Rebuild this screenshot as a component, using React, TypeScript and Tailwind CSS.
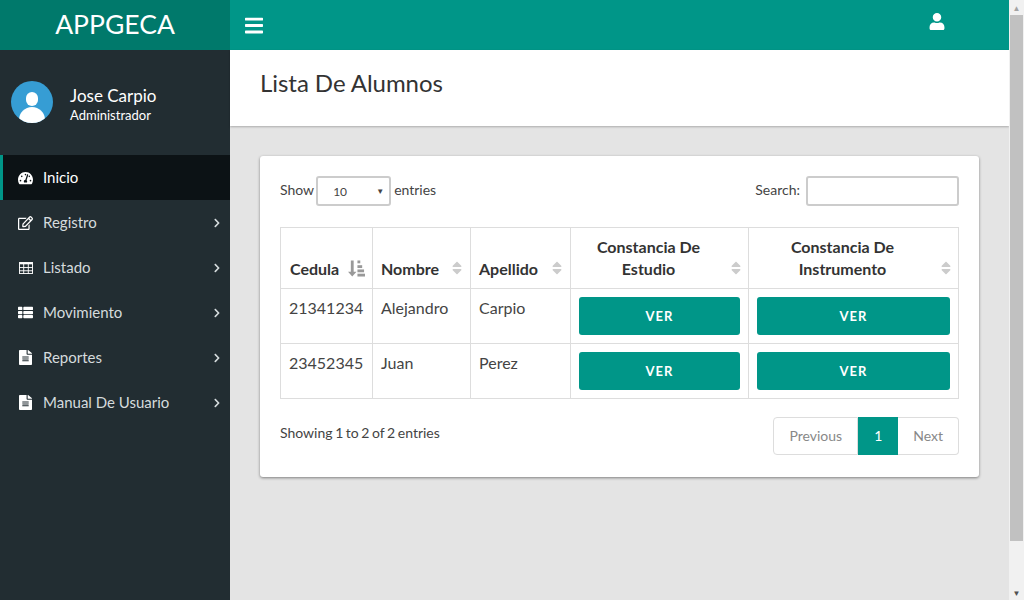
import { FaBars, FaChevronRight, FaFileAlt, FaRegEdit, FaSort, FaTachometerAlt, FaThList, FaUser } from 'react-icons/fa'

const GridIcon = ({ className }: { className?: string; preserveAspectRatio?: string }) => (
  <svg viewBox="0 0 15 13" className={className} fill="none" stroke="currentColor" strokeWidth="1">
    <rect x="0.5" y="0.5" width="14" height="12" />
    <path d="M0.5 1.5H14.5" strokeWidth="2" />
    <path d="M0 6H15M0 9.5H15M5 2V13M10 2V13" />
  </svg>
)

const SortedIcon = ({ className }: { className?: string }) => (
  <svg viewBox="0 0 18 17" className={className} fill="currentColor">
    <path d="M3 0H6V12H9L4.5 17L0 12H3Z" />
    <rect x="10" y="0" width="3" height="3" />
    <rect x="10" y="5" width="5" height="3" />
    <rect x="10" y="9.5" width="7" height="3" />
    <rect x="10" y="14" width="8" height="3" />
  </svg>
)

const menu = [
  { name: 'Inicio', icon: FaTachometerAlt, size: 'w-[15px] h-[14px]', active: true },
  { name: 'Registro', icon: FaRegEdit, size: 'w-[15px] h-[14px]' },
  { name: 'Listado', icon: GridIcon, size: 'w-[14px] h-[12px]' },
  { name: 'Movimiento', icon: FaThList, size: 'w-[15px] h-[13px]' },
  { name: 'Reportes', icon: FaFileAlt, size: 'w-[13px] h-[15px]' },
  { name: 'Manual De Usuario', icon: FaFileAlt, size: 'w-[13px] h-[15px]' },
]

const alumnos = [
  { cedula: '21341234', nombre: 'Alejandro', apellido: 'Carpio' },
  { cedula: '23452345', nombre: 'Juan', apellido: 'Perez' },
]

const VerButton = () => (
  <button className="w-full h-[38px] pt-[2px] rounded-[3px] bg-[#009688] text-white text-[13px] font-bold tracking-[1px]">VER</button>
)

const App = () => {
  return (
    <div className="flex h-[600px] w-[1024px] overflow-hidden bg-[#e4e4e4] font-['Lato',sans-serif] text-[#333]">
      <div className="flex flex-col w-[1009px] shrink-0">
        {/* Top bar */}
        <header className="flex h-[50px] shrink-0 bg-[#009688] text-white">
          <div className="w-[230px] flex items-center justify-center bg-[#00796b] text-[26.5px] font-normal">APPGECA</div>
          <div className="flex flex-1 items-center pl-[15px] pr-[64px] justify-between">
            <FaBars className="w-[18px] h-[21px]" />
            <FaUser className="w-[16px] h-[17px] mb-[8px]" />
          </div>
        </header>

        <div className="flex flex-1 min-h-0">
          {/* Sidebar */}
          <aside className="w-[230px] shrink-0 bg-[#222d32]">
            <div className="flex items-center h-[105px] pl-[11px] gap-[17px]">
              <div className="relative w-[42px] h-[42px] mb-[2px] rounded-full bg-[#369dd4] overflow-hidden">
                <div className="absolute left-[15px] top-[11px] w-[12px] h-[14px] rounded-full bg-white" />
                <div className="absolute left-[8px] top-[26px] w-[26px] h-[20px] rounded-t-[13px] bg-white" />
              </div>
              <div className="text-white mt-[5px]">
                <div className="text-[17px] leading-[20px]">Jose Carpio</div>
                <div className="text-[13px] leading-[17px] mt-[1px]">Administrador</div>
              </div>
            </div>
            <nav>
              {menu.map((item) => (
                <div
                  key={item.name}
                  className={item.active
                    ? 'flex items-center h-[45px] border-l-[3px] border-[#009688] bg-[#0c1215] pl-[15px] pr-[9px] text-white'
                    : 'flex items-center h-[45px] border-l-[3px] border-transparent pl-[15px] pr-[9px] text-[#d5dbdd]'}
                >
                  <span className="flex w-[15px] shrink-0 justify-center">
                    <item.icon className={`${item.size} text-white shrink-0`} preserveAspectRatio="none" />
                  </span>
                  <span className="ml-[10px] flex-1 text-[15px]">{item.name}</span>
                  {!item.active && <FaChevronRight className="w-[8px] h-[10px]" />}
                </div>
              ))}
            </nav>
          </aside>

          {/* Content */}
          <main className="flex-1 min-w-0">
            <div className="flex items-center h-[76px] bg-white pl-[30px] pb-[10px] shadow-[0_1px_2px_rgba(0,0,0,0.25)]">
              <h1 className="text-[24px] font-normal text-[#333] tracking-[-0.05px]">Lista De Alumnos</h1>
            </div>

            <section className="mt-[30px] mx-[30px] h-[321px] rounded-[3px] bg-white p-[20px] shadow-[0_1px_3px_rgba(0,0,0,0.45)]">
              <div className="flex items-center justify-between h-[30px] text-[14px] text-[#444]">
                <div className="flex items-center">
                  <span className="mb-[3px]">Show</span>
                  <div className="flex items-center justify-between ml-[2px] mr-[3px] w-[75px] h-[30px] border-2 border-[#ccc] rounded-[3px] pl-[15px] pr-[4px] text-[12px]">
                    <span className="mt-[1px]">10</span>
                    <span className="text-[8px] text-[#444] mr-[1px]">▼</span>
                  </div>
                  <span className="mb-[3px]">entries</span>
                </div>
                <div className="flex items-center">
                  <span className="mb-[3px]">Search:</span>
                  <div className="ml-[6px] w-[153px] h-[30px] border-2 border-[#ccc] rounded-[3px]" />
                </div>
              </div>

              <table className="mt-[21px] w-[678px] table-fixed border-collapse text-[16px] text-[#444]">
                <colgroup>
                  <col className="w-[92px]" />
                  <col className="w-[98px]" />
                  <col className="w-[100px]" />
                  <col className="w-[178px]" />
                  <col className="w-[210px]" />
                </colgroup>
                <thead>
                  <tr className="h-[61px] text-[16px] text-[#333]">
                    <th className="relative border border-[#ddd] pl-[9px] pt-[22px] text-left font-bold">
                      Cedula
                      <SortedIcon className="absolute right-[7px] bottom-[11px] w-[17px] h-[17px] text-[#999]" />
                    </th>
                    <th className="relative border border-[#ddd] pl-[8px] pt-[22px] text-left font-bold">
                      Nombre
                      <FaSort className="absolute right-[6px] bottom-[12px] w-[14px] h-[16px] text-[#ccc]" />
                    </th>
                    <th className="relative border border-[#ddd] pl-[8px] pt-[22px] text-left font-bold">
                      Apellido
                      <FaSort className="absolute right-[6px] bottom-[12px] w-[14px] h-[16px] text-[#ccc]" />
                    </th>
                    <th className="relative border border-[#ddd] pl-[8px] pr-[30px] leading-[22px] text-center font-bold">
                      Constancia De Estudio
                      <FaSort className="absolute right-[5px] bottom-[12px] w-[14px] h-[16px] text-[#ccc]" />
                    </th>
                    <th className="relative border border-[#ddd] pl-[8px] pr-[30px] leading-[22px] text-center font-bold">
                      Constancia De Instrumento
                      <FaSort className="absolute right-[5px] bottom-[12px] w-[14px] h-[16px] text-[#ccc]" />
                    </th>
                  </tr>
                </thead>
                <tbody>
                  {alumnos.map((a) => (
                    <tr key={a.cedula} className="h-[55px] align-top">
                      <td className="border border-[#ddd] pl-[8px] pt-[7px]">{a.cedula}</td>
                      <td className="border border-[#ddd] pl-[8px] pt-[7px]">{a.nombre}</td>
                      <td className="border border-[#ddd] pl-[8px] pt-[7px]">{a.apellido}</td>
                      <td className="border border-[#ddd] px-[8px] pt-[8px]"><VerButton /></td>
                      <td className="border border-[#ddd] px-[8px] pt-[8px]"><VerButton /></td>
                    </tr>
                  ))}
                </tbody>
              </table>

              <div className="flex items-start justify-between mt-[18px]">
                <span className="mt-[5px] text-[14px] text-[#444] [word-spacing:-1px]">Showing 1 to 2 of 2 entries</span>
                <div className="flex h-[38px] text-[14px] text-[#888]">
                  <span className="flex items-center justify-center w-[85px] pb-[1px] border border-[#ddd] rounded-l-[4px]">Previous</span>
                  <span className="flex items-center justify-center w-[40px] pb-[1px] bg-[#009688] text-white">1</span>
                  <span className="flex items-center px-[15px] pb-[1px] border border-l-0 border-[#ddd] rounded-r-[4px]">Next</span>
                </div>
              </div>
            </section>
          </main>
        </div>
      </div>

      {/* Scrollbar */}
      <div className="flex flex-col items-center w-[15px] shrink-0 bg-[#f1f1f1]">
        <div className="flex items-center justify-center h-[15px] text-[8px] text-[#a3a3a3]">▲</div>
        <div className="w-[13px] h-[526px] bg-[#c1c1c1]" />
        <div className="flex-1" />
        <div className="flex items-center justify-center h-[15px] text-[8px] text-[#505050]">▼</div>
      </div>
    </div>
  )
}

export default App
